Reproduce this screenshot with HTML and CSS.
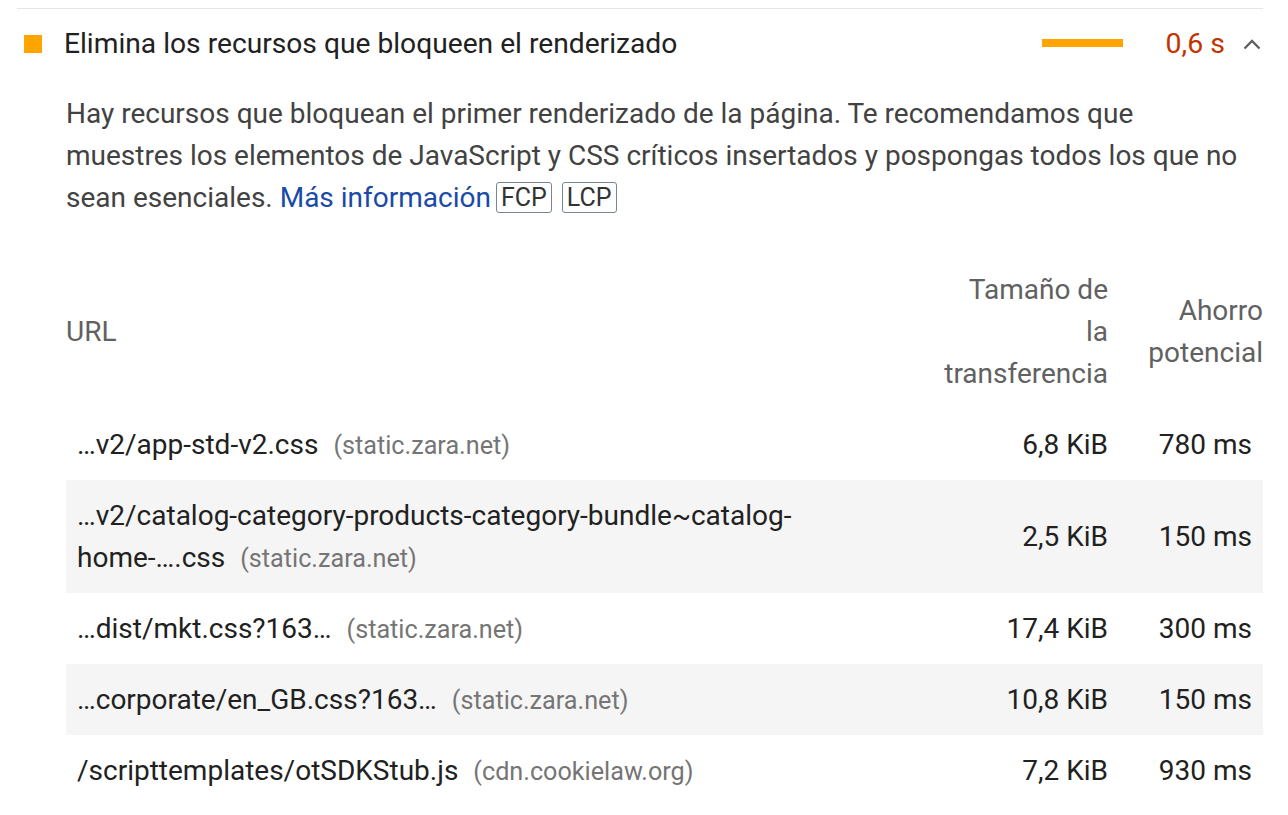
FILE: index.html
```html
<!DOCTYPE html>
<html lang="es">
<head>
<meta charset="utf-8">
<title>Elimina los recursos que bloqueen el renderizado</title>
<link rel="stylesheet" href="styles.css">
</head>
<body>
<div class="audit">
  <div class="summary">
    <span class="score-icon"></span>
    <span class="title">Elimina los recursos que bloqueen el renderizado</span>
    <span class="sparkbar"></span>
    <span class="display-value">0,6 s</span>
    <svg class="chevron" width="18" height="11" viewBox="0 0 18 11"><path d="M1.5 9.5 L9 2 L16.5 9.5" fill="none" stroke="#616161" stroke-width="2.4"/></svg>
  </div>
  <div class="description">Hay recursos que bloquean el primer renderizado de la página. Te recomendamos que muestres los elementos de JavaScript y CSS críticos insertados y pospongas todos los que no sean esenciales. <a class="link" href="#">Más información</a><span class="adorn first">FCP</span><span class="adorn">LCP</span></div>
  <table class="details">
    <thead>
      <tr>
        <th class="col-url">URL</th>
        <th class="col-num">Tamaño de la transferencia</th>
        <th class="col-last">Ahorro potencial</th>
      </tr>
    </thead>
    <tbody>
      <tr>
        <td class="cell-url">…v2/app-std-v2.css<span class="host">(static.zara.net)</span></td>
        <td class="cell-num">6,8 KiB</td>
        <td class="cell-num">780 ms</td>
      </tr>
      <tr class="odd">
        <td class="cell-url">…v2/catalog-category-products-category-bundle~catalog-home-….css<span class="host">(static.zara.net)</span></td>
        <td class="cell-num">2,5 KiB</td>
        <td class="cell-num">150 ms</td>
      </tr>
      <tr>
        <td class="cell-url">…dist/mkt.css?163…<span class="host">(static.zara.net)</span></td>
        <td class="cell-num">17,4 KiB</td>
        <td class="cell-num">300 ms</td>
      </tr>
      <tr class="odd">
        <td class="cell-url">…corporate/en_GB.css?163…<span class="host">(static.zara.net)</span></td>
        <td class="cell-num">10,8 KiB</td>
        <td class="cell-num">150 ms</td>
      </tr>
      <tr>
        <td class="cell-url">/scripttemplates/otSDKStub.js<span class="host">(cdn.cookielaw.org)</span></td>
        <td class="cell-num">7,2 KiB</td>
        <td class="cell-num">930 ms</td>
      </tr>
    </tbody>
  </table>
</div>
</body>
</html>
```

FILE: styles.css
```css
* { box-sizing: border-box; }
html, body { margin: 0; padding: 0; background: #fff; }
body {
  font-family: Roboto, "Liberation Sans", sans-serif;
  color: #212121;
  font-size: 28px;
  line-height: 42px;
}
.audit {
  margin: 8px 25px 0 17px;
  border-top: 1px solid #e6e6e6;
}
.summary {
  display: flex;
  align-items: center;
  height: 70px;
  padding: 0 2px 0 7px;
}
.score-icon {
  width: 18px;
  height: 18px;
  background: #ffa400;
  margin-right: 22px;
  flex: none;
}
.title {
  flex: 1;
  font-size: 28.2px;
  color: #212121;
}
.sparkbar {
  width: 81px;
  height: 8px;
  background: #ffa400;
  margin-right: 43px;
  margin-top: -2px;
  flex: none;
}
.display-value {
  color: #c33300;
  font-size: 28.5px;
}
.chevron {
  margin-left: 18px;
  flex: none;
}
.description {
  margin: 14px 20px 0 49px;
  color: #424242;
  font-size: 28px;
}
.link {
  color: #1a4aa8;
  text-decoration: none;
}
.adorn {
  display: inline-block;
  border: 1px solid #7a8594;
  border-radius: 3px;
  padding: 0 4px;
  line-height: 29px;
  font-size: 25px;
  color: #333;
  margin-left: 10px;
  vertical-align: 1px;
}
.adorn.first { margin-left: 5px; }
.details {
  margin: 35px 0 0 49px;
  width: calc(100% - 49px);
  border-collapse: collapse;
}
.details th {
  font-weight: normal;
  color: #616161;
  vertical-align: middle;
  padding: 14.5px 11px;
}
.details th.col-url { text-align: left; padding-left: 0; }
.details th.col-num { text-align: right; width: 120px; }
.details th.col-last { text-align: right; width: 144px; padding-right: 0; }
.details td {
  padding: 14.5px 11px;
  vertical-align: middle;
}
.details td.cell-num { text-align: right; white-space: nowrap; }
.details tr.odd td { background: #f5f5f5; }
.host {
  margin-left: 15px;
  color: #757575;
  font-size: 25.2px;
  line-height: 1;
}
```
